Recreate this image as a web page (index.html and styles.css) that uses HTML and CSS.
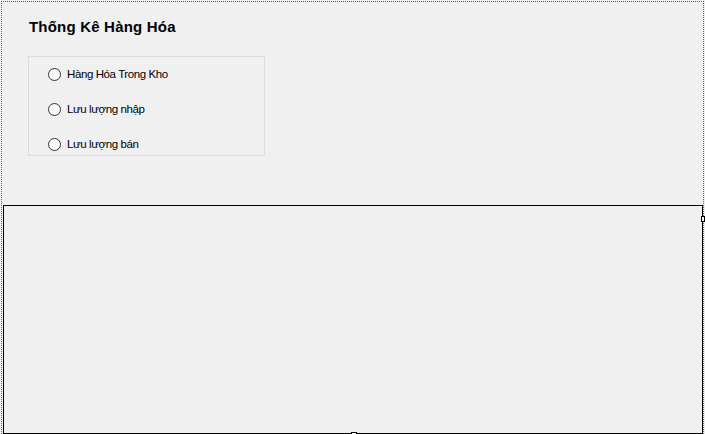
FILE: index.html
```html
<!DOCTYPE html>
<html lang="vi">
<head>
<meta charset="utf-8">
<title>Thống Kê Hàng Hóa</title>
<link rel="stylesheet" href="styles.css">
</head>
<body>
<div class="form">
  <div class="designer">
    <h1 class="title">Thống Kê Hàng Hóa</h1>
    <div class="group">
      <label class="radio"><span class="dot"></span><span class="label">Hàng Hóa Trong Kho</span></label>
      <label class="radio"><span class="dot"></span><span class="label">Lưu lượng nhập</span></label>
      <label class="radio"><span class="dot"></span><span class="label">Lưu lượng bán</span></label>
    </div>
    <div class="panel">
      <span class="handle handle-right"></span>
      <span class="handle handle-bottom"></span>
    </div>
  </div>
</div>
</body>
</html>
```
FILE: styles.css
```css
html, body {
  margin: 0;
  padding: 0;
  background: #f0f0f0;
}
.form {
  width: 705px;
  height: 434px;
  box-sizing: border-box;
  padding: 1px 0 0 1px;
  background: #f0f0f0;
  overflow: hidden;
  font-family: "Liberation Sans", Arial, sans-serif;
  color: #000;
}
.designer {
  width: 703px;
  height: 433px;
  box-sizing: border-box;
  border: 1px dotted #606060;
  border-bottom: none;
  display: flex;
  flex-direction: column;
  align-items: flex-start;
}
.title {
  margin: 16px 0 0 27px;
  font-size: 15px;
  line-height: 18px;
  font-weight: bold;
  letter-spacing: 0.2px;
}
.group {
  margin: 20px 0 0 26px;
  width: 237px;
  height: 100px;
  box-sizing: border-box;
  border: 1px solid #dcdcdc;
  display: flex;
  flex-direction: column;
  padding: 10px 0 0 19px;
  gap: 21px;
}
.radio {
  display: flex;
  align-items: center;
  height: 14px;
  font-size: 11.5px;
  letter-spacing: -0.4px;
}
.dot {
  width: 13px;
  height: 13px;
  box-sizing: border-box;
  border: 1px solid #333;
  border-radius: 50%;
  background: #fafafa;
  margin-right: 6px;
  flex: none;
}
.panel {
  position: relative;
  margin: 49px 0 0 1px;
  width: 700px;
  height: 229px;
  box-sizing: border-box;
  border: 1px solid #000;
}
.handle {
  position: absolute;
  background: #fff;
  border: 1px solid #000;
  box-sizing: border-box;
}
.handle-right {
  right: -3px;
  top: 10px;
  width: 4px;
  height: 6px;
}
.handle-bottom {
  bottom: -1px;
  left: 347px;
  width: 6px;
  height: 2px;
  border-bottom: none;
}
```
